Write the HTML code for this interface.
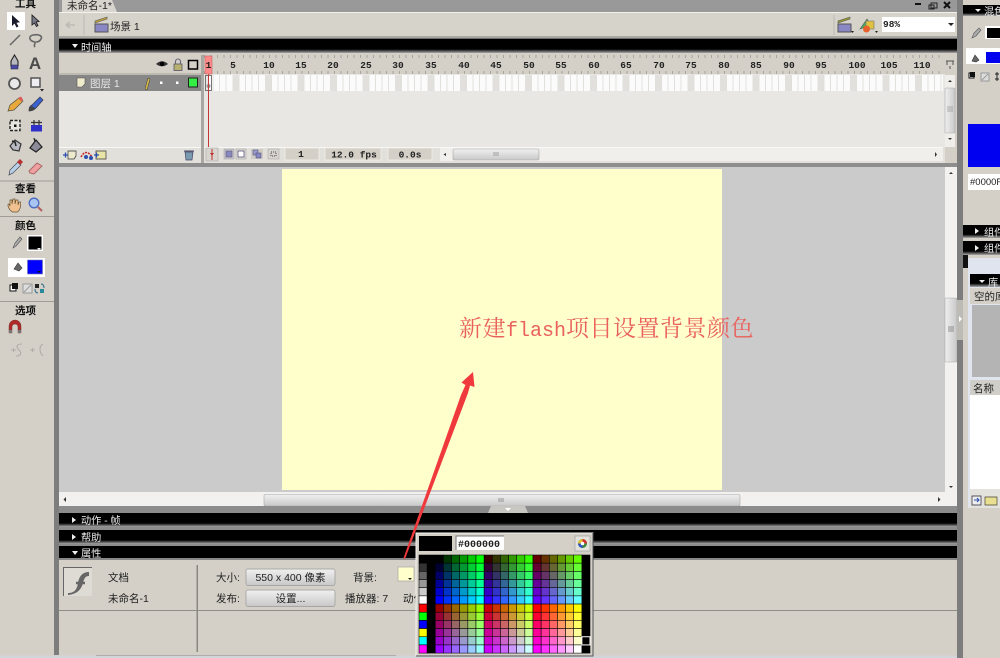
<!DOCTYPE html>
<html lang="zh">
<head>
<meta charset="utf-8">
<title>Flash</title>
<style>
html,body{margin:0;padding:0;background:#d4d0c8;overflow:hidden}
svg{display:block;width:1000px;height:658px;filter:blur(.35px)}
text{font-family:"Liberation Sans","WenQuanYi Zen Hei","Noto Sans CJK SC",sans-serif;font-size:10.5px;fill:#222}
.w{fill:#eee;font-size:10.2px}
.b{font-weight:bold;fill:#111}
.m{font-family:"Liberation Mono","Noto Sans CJK SC",monospace;font-weight:bold;font-size:9.5px;fill:#222;text-anchor:middle}
</style>
</head>
<body>
<svg xmlns="http://www.w3.org/2000/svg" viewBox="0 0 1000 658" id="r">
<defs>
<linearGradient id="h" x1="0" y1="0" x2="0" y2="1"><stop offset="0" stop-color="#000"/><stop offset=".72" stop-color="#000"/><stop offset="1" stop-color="#aaa"/></linearGradient>
<linearGradient id="t" x1="0" y1="0" x2="0" y2="1"><stop offset="0" stop-color="#f0f0f0"/><stop offset="1" stop-color="#c8c8c8"/></linearGradient>
<linearGradient id="v" x1="0" y1="0" x2="1" y2="0"><stop offset="0" stop-color="#f0f0f0"/><stop offset="1" stop-color="#c8c8c8"/></linearGradient>
<pattern id="f" x="232.5" y="75" width="32.5" height="16" patternUnits="userSpaceOnUse">
<rect width="32.5" height="16" fill="#fbfbfb"/>
<rect width="6.5" height="16" fill="#e2e0dc"/>
<path d="M6.5 0v16M13 0v16M19.5 0v16M26 0v16" stroke="#e0ded9" stroke-width=".9"/>
</pattern>
<pattern id="k" x="208" y="56" width="6.5" height="18" patternUnits="userSpaceOnUse">
<path d="M3 0v2M3 15v3" stroke="#9a9a94" stroke-width=".8"/>
</pattern>
</defs>

<!-- base -->
<rect width="1000" height="658" fill="#d4d0c8"/>
<rect x="54" y="0" width="5" height="655" fill="#7d7d7d"/>

<!-- tab bar -->
<rect x="59" y="0" width="901" height="12" fill="#999"/>
<path d="M62 12V0h50l5 12z" fill="#d8d5ce"/>
<text x="67" y="9" font-size="10">未命名-1*</text>
<path d="M915 4h6" stroke="#111" stroke-width="2"/>
<path d="M931 3h6v5h-6zM929 5h5v4h-5z" fill="none" stroke="#222"/>
<path d="M944 2l6 6M950 2l-6 6" stroke="#111" stroke-width="2"/>

<!-- edit bar -->
<rect x="59" y="12" width="901" height="26" fill="#d6d3cb"/>
<rect x="59" y="12" width="901" height="1" fill="#f2f1ec"/>
<rect x="59" y="36" width="901" height="2" fill="#aaa8a2"/>
<path d="M66 25h9M66 25l4-3M66 25l4 3" stroke="#bdbab4" stroke-width="1.6" fill="none"/>
<path d="M84 15v20" stroke="#bbb8b0"/>
<rect x="95" y="24" width="13" height="8" fill="#8a88c4" stroke="#555"/>
<path d="M95 23l12-4v-2l-12 4z" fill="#c4a43a" stroke="#555" stroke-width=".6"/>
<text x="110" y="30">场景 1</text>
<path d="M834 15v20" stroke="#bbb8b0"/>
<rect x="838" y="24" width="13" height="8" fill="#8a88c4" stroke="#555"/>
<path d="M838 23l12-4v-2l-12 4z" fill="#9a9a30" stroke="#555" stroke-width=".6"/>
<path d="M851 31h3l-1.500 2z" fill="#222"/>
<path d="M860 29l7-10 4 6z" fill="#4aa860" stroke="#555" stroke-width=".6"/>
<rect x="866" y="21" width="8" height="8" fill="#e0c040" stroke="#777" stroke-width=".6"/>
<circle cx="866.500" cy="29" r="3.500" fill="#e8602c"/>
<path d="M875 31h3l-1.500 2z" fill="#222"/>
<rect x="882" y="17" width="73" height="15" fill="#fff"/>
<text x="883" y="27" class="m" style="text-anchor:start">98%</text>
<path d="M948 23h6l-3 3z" fill="#222"/>

<!-- timeline header -->
<rect x="59" y="38" width="899" height="1.500" fill="#6e6e6e"/>
<rect x="59" y="39" width="899" height="14" fill="url(#h)"/>
<path d="M72 44h6l-3 4z" fill="#eee"/>
<text x="81" y="51" class="w">时间轴</text>

<!-- timeline -->
<rect x="59" y="55" width="142" height="19" fill="#d4d0c8"/>
<rect x="59" y="74" width="142" height="74" fill="#e8e6e2"/>
<rect x="59" y="73" width="142" height="2" fill="#bdbab2"/>
<rect x="204" y="55" width="741" height="19" fill="#d4d0c8"/>
<rect x="204" y="55" width="741" height="19" fill="url(#k)"/>
<rect x="204" y="74" width="741" height="74" fill="#e9e7e3"/>
<rect x="209" y="75" width="734" height="16" fill="url(#f)"/>
<rect x="201" y="55" width="3" height="108" fill="#a9a7a1"/>
<g>
<path d="M156 64q6-5.500 12 0q-6 4.500-12 0z" fill="#333"/><circle cx="162" cy="64" r="2.200" fill="#000"/>
<rect x="174" y="64" width="8" height="6.500" fill="#b8b070" stroke="#556" stroke-width=".8"/>
<path d="M175.500 64v-2.500a2.500 2.500 0 0 1 5 0v2.500" fill="none" stroke="#667" stroke-width="1.100"/>
<rect x="188.500" y="60.500" width="9" height="8.500" fill="none" stroke="#000" stroke-width="1.500"/>
</g>
<g class="ruler">
<text x="233" y="68" class="m">5</text><text x="269" y="68" class="m">10</text><text x="301" y="68" class="m">15</text><text x="333" y="68" class="m">20</text><text x="366" y="68" class="m">25</text><text x="398" y="68" class="m">30</text><text x="431" y="68" class="m">35</text><text x="464" y="68" class="m">40</text><text x="496" y="68" class="m">45</text><text x="529" y="68" class="m">50</text><text x="561" y="68" class="m">55</text><text x="594" y="68" class="m">60</text><text x="626" y="68" class="m">65</text><text x="659" y="68" class="m">70</text><text x="691" y="68" class="m">75</text><text x="724" y="68" class="m">80</text><text x="756" y="68" class="m">85</text><text x="789" y="68" class="m">90</text><text x="821" y="68" class="m">95</text><text x="857" y="68" class="m">100</text><text x="889" y="68" class="m">105</text><text x="922" y="68" class="m">110</text>
</g>
<path d="M946 61h8M947 61v4M953 61v4M950 66v3" stroke="#555" fill="none"/>
<!-- layer row -->
<rect x="59" y="75" width="142" height="16" fill="#878787"/>
<path d="M77 78h8v6l-3 3h-5z" fill="#eeeacc" stroke="#555" stroke-width=".6"/>
<text x="90" y="87" style="fill:#e8e8e8">图层 1</text>
<path d="M145 89l3-11 2 1-3 11z" fill="#d8b848" stroke="#333" stroke-width=".5"/>
<rect x="160" y="81.500" width="2.500" height="2.500" fill="#fff"/>
<rect x="176" y="81.500" width="2.500" height="2.500" fill="#fff"/>
<rect x="188.500" y="78" width="9" height="9" fill="#33ee44" stroke="#222"/>
<!-- playhead -->
<rect x="205" y="56" width="7" height="18" fill="#ff8a8a" stroke="#c86060" stroke-width=".6"/>
<text x="208.500" y="68" class="m">1</text>
<rect x="205.500" y="75.500" width="6" height="15" fill="none" stroke="#555" stroke-width=".8"/>
<circle cx="208.500" cy="86" r="2" fill="#999"/>
<path d="M208.500 74v73" stroke="#c03838" stroke-width="1"/>
<!-- timeline bottom -->
<rect x="59" y="147" width="142" height="16" fill="#e2e0da"/>
<rect x="59" y="147" width="142" height="1" fill="#f8f8f6"/>
<path d="M68 151h8v5l-2 3h-6z" fill="#eeeacc" stroke="#333" stroke-width=".7"/>
<path d="M63 155h5M65.500 152.500v5" stroke="#2a4fb0" stroke-width="1.300"/>
<path d="M81 157q5-9 11 0" fill="none" stroke="#c02020" stroke-width="1.500" stroke-dasharray="2 1"/>
<circle cx="86" cy="157" r="2" fill="#2a4fb0"/><circle cx="91" cy="158" r="2" fill="#2a4fb0"/>
<path d="M96 151h10v8H96z" fill="#e8e4a8" stroke="#333" stroke-width=".7"/>
<path d="M94 155h5M96.500 152.500v5" stroke="#2a4fb0" stroke-width="1.300"/>
<path d="M185 152h8l-1 8h-6z" fill="#7a9ab0" stroke="#446" stroke-width=".7"/><path d="M184 151h10" stroke="#446"/>
<rect x="204" y="147" width="741" height="16" fill="#e2e0da"/>
<rect x="204" y="147" width="739" height="1" fill="#f8f8f6"/>
<rect x="206" y="148" width="12" height="13" fill="#d8d5ce" stroke="#aaa" stroke-width=".6"/>
<path d="M212 149v11" stroke="#c03030"/><path d="M210 153h4l-2 3z" fill="#c03030"/>
<rect x="224" y="149" width="10" height="10" fill="#c4c0d0" stroke="#aaa" stroke-width=".6"/><rect x="226" y="151" width="6" height="6" fill="#8888c0" stroke="#555" stroke-width=".5"/>
<rect x="236" y="149" width="10" height="10" fill="#dcd8d0" stroke="#aaa" stroke-width=".6"/><rect x="238" y="151" width="6" height="6" fill="#fff" stroke="#447" stroke-width=".7"/>
<rect x="251" y="149" width="12" height="10" fill="#cfcbc4"/><rect x="253" y="150" width="5" height="5" fill="#9a9ac8" stroke="#447" stroke-width=".5"/><rect x="256" y="153" width="5" height="5" fill="#8888c0" stroke="#447" stroke-width=".5"/>
<rect x="268" y="149" width="11" height="10" fill="#d8d5ce" stroke="#aaa" stroke-width=".6"/><rect x="271" y="152" width="5" height="4" fill="none" stroke="#445" stroke-dasharray="1 1"/>
<rect x="285" y="148" width="34" height="12" fill="#d4d0c8" stroke="#f0efe8" stroke-width=".8"/>
<text x="301" y="157" class="m">1</text>
<rect x="325" y="148" width="56" height="12" fill="#d4d0c8" stroke="#f0efe8" stroke-width=".8"/>
<text x="354" y="157.500" class="m">12.0 fps</text>
<rect x="388" y="148" width="44" height="12" fill="#d4d0c8" stroke="#f0efe8" stroke-width=".8"/>
<text x="410" y="157.500" class="m">0.0s</text>
<rect x="440" y="148" width="503" height="13" fill="#f0efec"/>
<path d="M446 153l-2.500 1.500 2.500 1.500z" fill="#333"/>
<rect x="453" y="149" width="86" height="11" rx="1.500" fill="url(#t)" stroke="#a8a8a8" stroke-width=".6"/>
<path d="M494 152v4M496 152v4M498 152v4" stroke="#777" stroke-width=".6"/>
<path d="M935 152v5l2-2.500z" fill="#333"/>
<!-- v scroll timeline -->
<rect x="945" y="74" width="13" height="89" fill="#d4d0c8"/>
<rect x="945" y="75" width="10" height="72" fill="#efeeeb"/>
<rect x="945" y="88" width="10" height="45" rx="1" fill="url(#v)" stroke="#aaa" stroke-width=".6"/>
<path d="M947 107h6M947 109h6M947 111h6" stroke="#777" stroke-width=".6"/>
<path d="M948 82l2-2 2 2zM948 138l2 2 2-2z" fill="#333"/>

<!-- divider -->
<rect x="59" y="163" width="899" height="4" fill="#8e8e8e"/>

<!-- stage -->
<rect x="59" y="167" width="886" height="325" fill="#cbcbcb"/>
<rect x="282" y="169" width="440" height="321" fill="#ffffcc"/>
<rect x="945" y="167" width="13" height="339" fill="#f2f1ef"/>
<rect x="945" y="298" width="12" height="64" rx="1" fill="url(#v)" stroke="#aaa" stroke-width=".6"/>
<path d="M948 327h6M948 329h6M948 331h6" stroke="#777" stroke-width=".7"/>
<path d="M949 174l2-2 2 2zM949 486l2 2 2-2z" fill="#333"/>
<rect x="59" y="492" width="899" height="14" fill="#f2f1ef"/>
<rect x="264" y="494.500" width="476" height="11.500" rx="1.500" fill="url(#t)" stroke="#aaa" stroke-width=".6"/>
<path d="M499 498v4M501 498v4M503 498v4" stroke="#777" stroke-width=".7"/>
<path d="M66 497v5l-2.500-2.500z" fill="#333"/><path d="M938 497v5l2.500-2.500z" fill="#333"/>
<rect x="59" y="506" width="899" height="7" fill="#8c8c8c"/>
<path d="M488 513l3-7h34l3 7z" fill="#c8c6c0"/><path d="M505 508h6l-3 3z" fill="#fff"/>

<!-- panels -->
<rect x="59" y="513" width="899" height="14" fill="url(#h)"/>
<path d="M72 517v6l4-3z" fill="#eee"/>
<text x="81" y="524" class="w">动作 - 帧</text>
<rect x="59" y="527" width="899" height="3" fill="#8c8c8c"/>
<rect x="59" y="530" width="899" height="14" fill="url(#h)"/>
<path d="M72 534v6l4-3z" fill="#eee"/>
<text x="81" y="541" class="w">帮助</text>
<rect x="59" y="544" width="899" height="2" fill="#8c8c8c"/>
<rect x="59" y="546" width="899" height="14" fill="#000"/>
<rect x="59" y="558" width="899" height="2" fill="#888"/>
<path d="M72 551h6l-3 4z" fill="#eee"/>
<text x="81" y="557" class="w">属性</text>

<!-- properties -->
<rect x="59" y="560" width="899" height="95" fill="#d4d0c8"/>
<rect x="64" y="568" width="28" height="28" fill="#dedbd5"/>
<path d="M63.500 596V567.500H92" fill="none" stroke="#666" stroke-width="1"/>
<path d="M68 593c7 0 9-4 10-10s4-11 11-11v4c-4 0-5 3-6 7s-4 11-15 12z" fill="#666"/>
<path d="M76 583h9" stroke="#666" stroke-width="2.500"/>
<text x="108" y="581">文档</text>
<text x="108" y="602" font-size="10">未命名-1</text>
<rect x="59" y="610" width="899" height="1" fill="#8f8d88"/>
<rect x="196.500" y="565" width="1.500" height="87" fill="#8a8884"/>
<text x="216" y="581">大小:</text>
<text x="216" y="602">发布:</text>
<rect x="246" y="569" width="89" height="16.500" rx="2" fill="url(#t)" stroke="#999" stroke-width=".7"/>
<text x="290.500" y="581" text-anchor="middle" font-size="10">550 x 400 像素</text>
<rect x="246" y="590" width="89" height="16.500" rx="2" fill="url(#t)" stroke="#999" stroke-width=".7"/>
<text x="290.500" y="602" text-anchor="middle">设置...</text>
<text x="353" y="581">背景:</text>
<text x="345" y="602">播放器: 7</text>
<text x="403" y="602">动作</text>
<rect x="398" y="567" width="16" height="14" fill="#ffffcc" stroke="#b0aea8" stroke-width=".8"/>
<path d="M408 578h4l-2 2z" fill="#222"/>
<rect x="0" y="655.500" width="964" height="2.500" fill="#d2d5da"/>
<path d="M96 655.500h300M440 655.500h20M490 655.500h20M540 655.500h20" stroke="#888" stroke-width=".6"/>

<!-- left toolbar -->
<text x="15" y="7" class="b">工具</text>
<rect x="7" y="12" width="18" height="18" fill="#fff"/>
<path d="M12 15v11l2.500-2.500 2 4 2-1-2-3.800 3.500-.5z" fill="#1a1a2a"/>
<path d="M32 15v10l2.500-2 2 3.500 1.500-1-2-3.500 3-.5z" fill="#7a7a8a" stroke="#222" stroke-width=".9"/>
<path d="M10 45l10-10" stroke="#666" stroke-width="1.500"/>
<path d="M35 47c-2-2 1-4 0-5-6-1-7-6-2-7 6-1 10 1 8 4-1 2-3 3-5 3" fill="none" stroke="#666" stroke-width="1.600"/>
<path d="M14.500 55l3.500 6v5h-7v-5z" fill="#b8b8c0" stroke="#222" stroke-width="1.100"/><rect x="11" y="65" width="7" height="4" fill="#4a4aa8" stroke="#223" stroke-width=".5"/>
<text x="35" y="69" class="b" style="fill:#4a4a4a;font-size:17px" text-anchor="middle">A</text>
<circle cx="14.500" cy="83.500" r="5.500" fill="#e8e8e8" stroke="#555" stroke-width="1.800"/>
<rect x="31" y="78" width="9" height="9" fill="#eeeef2" stroke="#555" stroke-width="1.500"/>
<path d="M40 89h4l-2 2.500z" fill="#222"/>
<path d="M8 111l2-6 9-7 4 3-9 9z" fill="#e8a83a" stroke="#554" stroke-width=".7"/><path d="M18 98l3-1.500 2 3-1.500 2z" fill="#d85a5a"/>
<path d="M29 111c0-4 1-5 3-6l8-8 3 3-7 8c-2 2-4 3-7 3z" fill="#3a62d0" stroke="#334" stroke-width=".7"/><path d="M29 111c0-3 1-4 3-5l3 2c-1 2-3 3-6 3z" fill="#444"/>
<rect x="10" y="120.500" width="10" height="10" fill="#e8e6e0" stroke="#222" stroke-width="1.400" stroke-dasharray="3 1.500"/><rect x="14" y="124.500" width="2.500" height="2.500" fill="#111"/>
<rect x="31" y="125" width="11" height="6.500" fill="#3030c8"/><path d="M34 120v5M39 120v5M31 122.500h11" stroke="#333" stroke-width="1.200"/>
<path d="M10 146l5-6 6 4-2 7-6-1z" fill="#b8b8c0" stroke="#333" stroke-width="1.200"/><path d="M12 141l3 1 1 4" stroke="#222" stroke-width="1.500" fill="none"/>
<path d="M30 148l6-8 6 7-6 5z" fill="#8a8a98" stroke="#222" stroke-width="1.200"/><path d="M35 142l-1-4" stroke="#222" stroke-width="1.200"/>
<path d="M9 175l1-5 8-8 3 3-8 8z" fill="#b8d0e8" stroke="#445" stroke-width=".7"/><path d="M17 162l3-3 3 3-3 3z" fill="#b83030"/>
<path d="M29 171l8-8 5 3-8 8-4-1z" fill="#f0a0a0" stroke="#a66" stroke-width="1"/>
<path d="M0 181h54M0 216.500h54M0 301.500h54" stroke="#9f9d98" stroke-width="1"/>
<text x="15" y="192" class="b">查看</text>
<path d="M10 210c-2-3-3-6-1-6l1 2v-6h2v4l1-5h2v5l1-4h2v5l1-3h1.500c.5 4-.5 8-3 10h-5z" fill="#f0c090" stroke="#653" stroke-width=".7"/>
<circle cx="34" cy="203" r="4.800" fill="#a8c4f0" stroke="#4a6ac0" stroke-width="1.300"/><path d="M38 207l4 4" stroke="#b06060" stroke-width="2"/>
<text x="15" y="229" class="b">颜色</text>
<path d="M13 248l2-5 5-6 2 2-6 7z" fill="#aaa" stroke="#555" stroke-width=".6"/>
<rect x="27" y="235" width="16" height="16" fill="#fff"/>
<rect x="28.500" y="236.500" width="13" height="13" fill="#000"/>
<path d="M37 248h4l-2 2z" fill="#eee"/>
<rect x="8" y="258" width="37" height="19" fill="#fff"/>
<path d="M14 269l4-6 4 5-3 3z" fill="#666" stroke="#333" stroke-width=".6"/>
<rect x="27.500" y="260" width="15" height="14" fill="#0000ff" stroke="#77a" stroke-width=".6"/>
<path d="M37 271h4l-2 2z" fill="#111"/>
<rect x="10" y="285" width="6" height="6" fill="#fff" stroke="#111"/><rect x="12" y="283" width="6" height="6" fill="#111"/>
<rect x="23" y="284" width="9" height="9" fill="#ddd" stroke="#999"/><path d="M24 292l7-7" stroke="#999"/>
<rect x="35" y="284" width="4" height="4" fill="#222"/><rect x="40" y="289" width="4" height="4" fill="#2a8a9a"/><path d="M41 284q3 0 3 4M38 293q-3 0-3-4" stroke="#2a6a8a" fill="none"/>
<text x="15" y="314" class="b">选项</text>
<path d="M12 333v-6a3 3 0 0 1 6 0v6h3v-7a6 6 0 0 0-12 0v7z" fill="#b02a2a" stroke="#622" stroke-width=".4"/><rect x="9" y="330" width="3" height="3" fill="#777"/><rect x="18" y="330" width="3" height="3" fill="#777"/>
<path d="M11 350h5M13.500 348v4M22 344c-6 0-6 3-3 6s2 6-3 6M30 350h5M32.500 348v4M43 344c-4 2-4 8 0 12" stroke="#b0aea8" fill="none" stroke-width="1.100"/>

<!-- right column -->
<rect x="957" y="0" width="6" height="658" fill="#7d7d7d"/>
<rect x="963" y="0" width="37" height="658" fill="#d4d0c8"/>
<rect x="963" y="5" width="37" height="11" fill="url(#h)"/>
<path d="M975 9h6l-3 3z" fill="#eee"/>
<text x="984" y="15" class="w">混色</text>
<path d="M972 38l2-5 5-5 2 2-5 6z" fill="#aaa" stroke="#555" stroke-width=".6"/>
<rect x="985" y="26" width="15" height="13" fill="#fff"/><rect x="987" y="28" width="13" height="10" fill="#000"/>
<rect x="966" y="48" width="34" height="16" rx="1" fill="#fff"/>
<path d="M972 61l3-6 4 5-3 2z" fill="#666" stroke="#333" stroke-width=".6"/>
<rect x="986" y="52" width="14" height="11" fill="#0000ee"/>
<rect x="969" y="73" width="5" height="5" fill="#fff" stroke="#111"/><rect x="970" y="72" width="5" height="5" fill="#111"/>
<rect x="981" y="73" width="8" height="8" fill="#ddd" stroke="#999"/><path d="M982 80l6-6" stroke="#999"/>
<path d="M997 72v9M995 74h4M995 79h4" stroke="#222"/>
<rect x="968" y="124" width="32" height="43" fill="#0000f0"/>
<rect x="968" y="174" width="32" height="16" fill="#fff"/>
<text x="970" y="185" style="font-size:9.5px">#0000FF</text>
<rect x="963" y="225" width="37" height="13" fill="url(#h)"/>
<path d="M975 228v6l4-3z" fill="#eee"/>
<text x="984" y="236" class="w">组件</text>
<rect x="963" y="241" width="37" height="14" fill="url(#h)"/>
<path d="M975 245v6l4-3z" fill="#eee"/>
<text x="984" y="252" class="w">组件</text>
<rect x="963" y="255" width="5" height="13" fill="#111"/>
<rect x="968" y="258" width="32" height="250" fill="#dfe4ee"/>
<rect x="970" y="274" width="30" height="13" fill="url(#h)"/>
<path d="M979 280h6l-3 3z" fill="#eee"/>
<text x="988" y="286" class="w">库</text>
<rect x="970" y="288" width="30" height="16" fill="#d4d0c8"/>
<text x="974" y="300">空的库</text>
<rect x="972" y="305" width="28" height="72" fill="#b4b4b4"/>
<rect x="970" y="380" width="30" height="15" fill="#d0cec8"/>
<text x="973" y="392">名称</text>
<rect x="970" y="395" width="30" height="94" fill="#fff"/>
<rect x="970" y="489" width="30" height="19" fill="#e4e2dc"/>
<path d="M972 496h9v9h-9z" fill="#eee" stroke="#223" stroke-width=".7"/><path d="M974 500h5M977 498l2 2-2 2" stroke="#2a4fb0" fill="none"/>
<path d="M985 497h12v8h-12z" fill="#e8e090" stroke="#443" stroke-width=".7"/>
<!-- handle -->
<rect x="957" y="300" width="6" height="40" fill="#bdbbb6"/>
<path d="M959 316v6l3-3z" fill="#fff"/>

<!-- annotation -->
<text x="459" y="336" style="font-size:23px;fill:#e9605c;letter-spacing:.5px;font-family:'Noto Serif CJK SC','Liberation Serif',serif">新建<tspan style="font-family:'Liberation Mono',monospace;font-size:20px;letter-spacing:0">flash</tspan>项目设置背景颜色</text>
<path d="M403.500 558L461 395 465.500 385 461.500 382.500 473 372 474.500 387 470 385.500 468 393 405 559z" fill="#f0393c"/>

<!-- color picker -->
<rect x="416" y="533" width="177" height="123" fill="#d4d0c8" stroke="#f4f4f0" stroke-width="1"/>
<path d="M593 533v123H416" fill="none" stroke="#555" stroke-width="1"/>
<rect x="419" y="536" width="33" height="15" fill="#000"/>
<rect x="456" y="536" width="48" height="14" fill="#fff"/>
<path d="M456 550v-14h48" fill="none" stroke="#777"/>
<text x="458" y="547" class="m" style="text-anchor:start;font-size:10px">#000000</text>
<rect x="575" y="536" width="15" height="15" fill="#e4e2dc" stroke="#999" stroke-width=".6"/>
<circle cx="582.500" cy="543.500" r="4.500" fill="#3a8a3a"/>
<path d="M582.500 543.500V539a4.500 4.500 0 0 1 4.500 4.500z" fill="#d83030"/>
<path d="M582.500 543.500H578a4.500 4.500 0 0 1 4.500-4.500z" fill="#e0c030"/>
<path d="M582.500 543.500v4.500a4.500 4.500 0 0 1-4.500-4.500z" fill="#3050c8"/>
<circle cx="582.500" cy="543.500" r="1.800" fill="#fff"/>
<g id="p"></g>
</svg>
<script>
(function(){
var N="http://www.w3.org/2000/svg",g=document.getElementById("p"),x0=419,y0=555,w=8.143,h=8.175;
function c(col,row,f){var r=document.createElementNS(N,"rect");r.setAttribute("x",x0+col*w);r.setAttribute("y",y0+row*h);r.setAttribute("width",w);r.setAttribute("height",h);r.setAttribute("fill",f);r.setAttribute("stroke","#000");r.setAttribute("stroke-width",".55");g.appendChild(r);}
var H=["00","33","66","99","cc","ff"];
var L=["000000","333333","666666","999999","cccccc","ffffff","ff0000","00ff00","0000ff","ffff00","00ffff","ff00ff"];
for(var i=0;i<12;i++){c(0,i,"#"+L[i]);c(1,i,"#000");c(20,i,"#000");
for(var j=0;j<18;j++){var b=i<6?0:3,R=H[b+Math.floor(j/6)],G=H[j%6],B=H[i%6];c(j+2,i,"#"+R+G+B);}}
var s=document.createElementNS(N,"rect");s.setAttribute("x",x0+20*w);s.setAttribute("y",y0+10*h);s.setAttribute("width",w);s.setAttribute("height",h);s.setAttribute("fill","none");s.setAttribute("stroke","#fff");g.appendChild(s);
})();
</script>
</body>
</html>
